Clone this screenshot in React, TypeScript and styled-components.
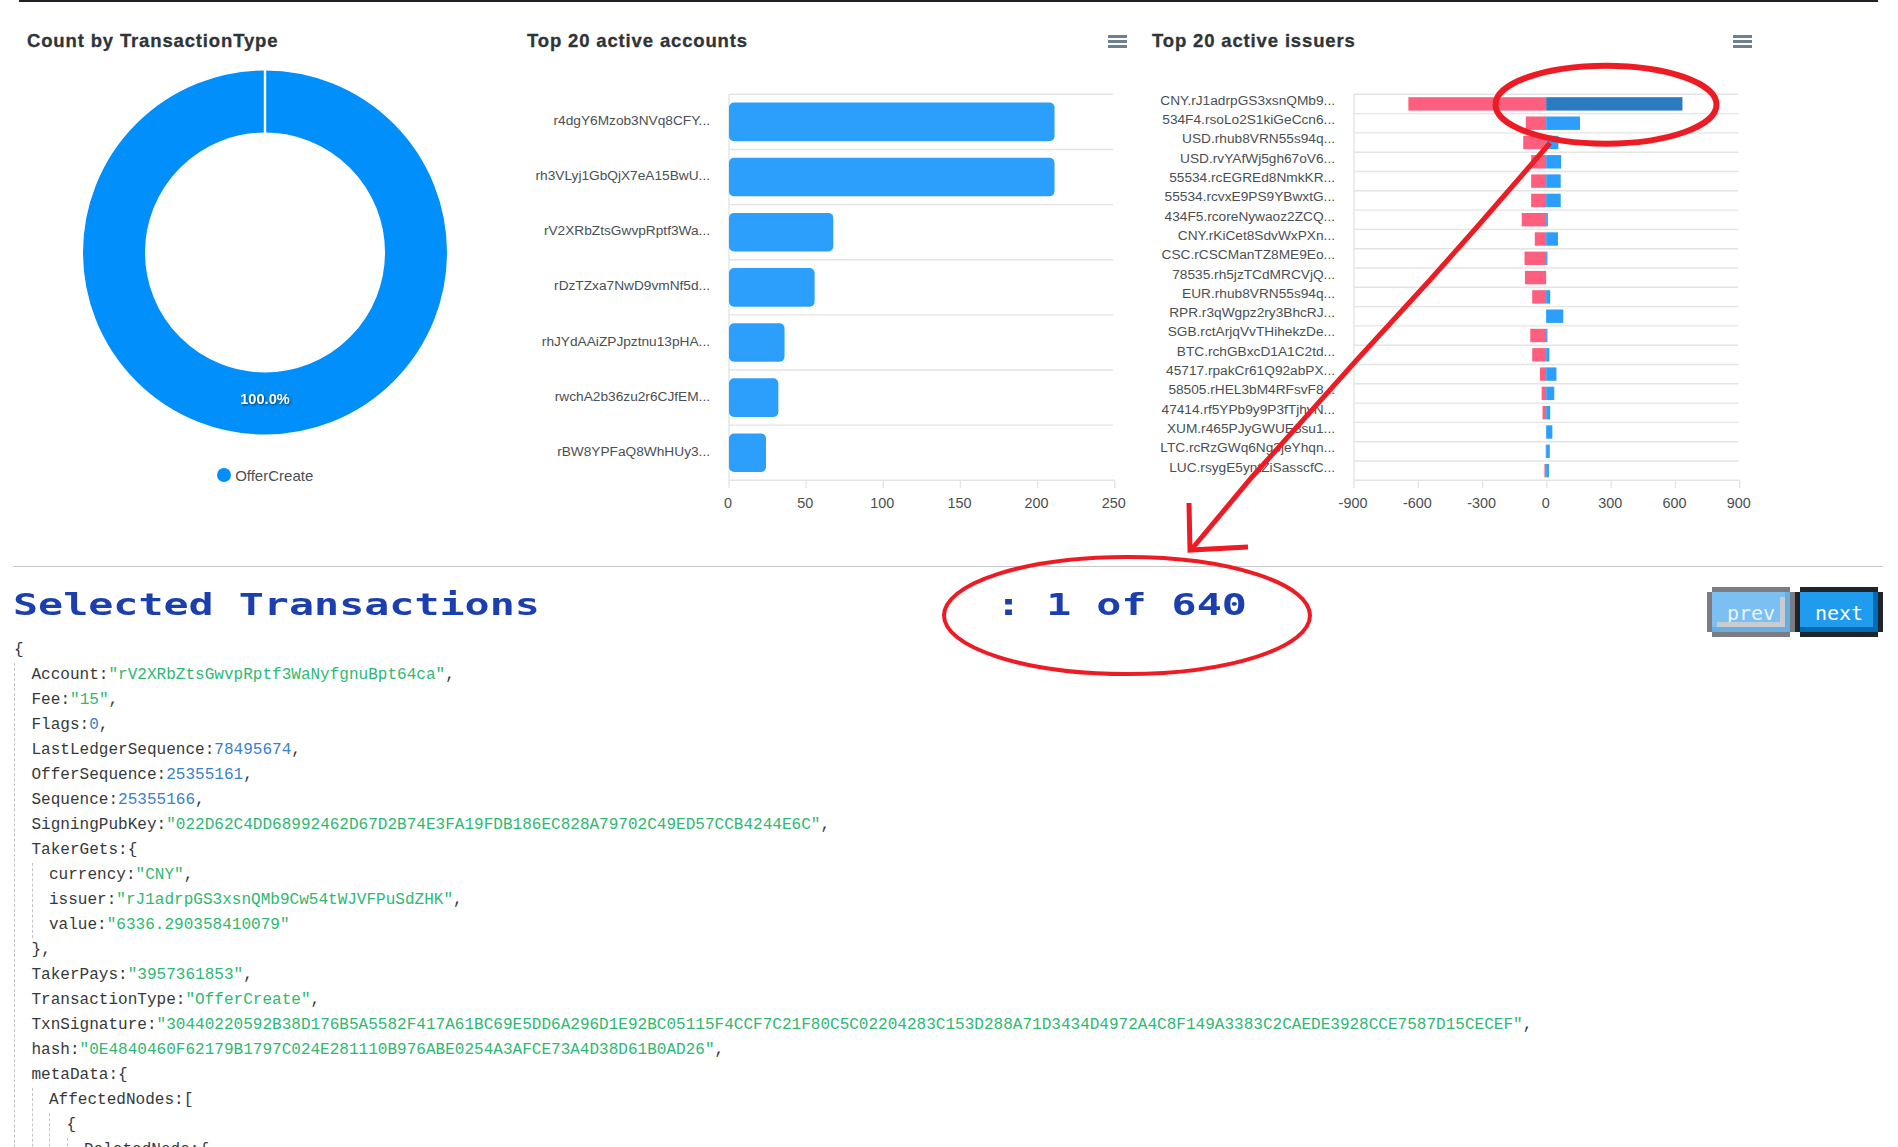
import React from "react";
import styled, { createGlobalStyle } from "styled-components";

const accounts = [
  { label: "r4dgY6Mzob3NVq8CFY...", value: 211 },
  { label: "rh3VLyj1GbQjX7eA15BwU...", value: 211 },
  { label: "rV2XRbZtsGwvpRptf3Wa...", value: 67.6 },
  { label: "rDzTZxa7NwD9vmNf5d...", value: 55.5 },
  { label: "rhJYdAAiZPJpztnu13pHA...", value: 36 },
  { label: "rwchA2b36zu2r6CJfEM...", value: 32 },
  { label: "rBW8YPFaQ8WhHUy3...", value: 24 },
];

const issuers = [
  { label: "CNY.rJ1adrpGS3xsnQMb9...", sell: 643, buy: 636 },
  { label: "534F4.rsoLo2S1kiGeCcn6...", sell: 95, buy: 158 },
  { label: "USD.rhub8VRN55s94q...", sell: 107, buy: 57 },
  { label: "USD.rvYAfWj5gh67oV6...", sell: 70, buy: 70 },
  { label: "55534.rcEGREd8NmkKR...", sell: 70, buy: 68 },
  { label: "55534.rcvxE9PS9YBwxtG...", sell: 70, buy: 68 },
  { label: "434F5.rcoreNywaoz2ZCQ...", sell: 114, buy: 8 },
  { label: "CNY.rKiCet8SdvWxPXn...", sell: 53, buy: 55 },
  { label: "CSC.rCSCManTZ8ME9Eo...", sell: 101, buy: 6 },
  { label: "78535.rh5jzTCdMRCVjQ...", sell: 99, buy: 0 },
  { label: "EUR.rhub8VRN55s94q...", sell: 65, buy: 19 },
  { label: "RPR.r3qWgpz2ry3BhcRJ...", sell: 0, buy: 80 },
  { label: "SGB.rctArjqVvTHihekzDe...", sell: 74, buy: 6 },
  { label: "BTC.rchGBxcD1A1C2td...", sell: 65, buy: 15 },
  { label: "45717.rpakCr61Q92abPX...", sell: 29, buy: 48 },
  { label: "58505.rHEL3bM4RFsvF8...", sell: 21, buy: 38 },
  { label: "47414.rf5YPb9y9P3fTjhyN...", sell: 17, buy: 19 },
  { label: "XUM.r465PJyGWUE8su1...", sell: 0, buy: 29 },
  { label: "LTC.rcRzGWq6Ng3jeYhqn...", sell: 2, buy: 17 },
  { label: "LUC.rsygE5yntZiSasscfC...", sell: 8, buy: 13 },
];

const transaction = {
  Account: "rV2XRbZtsGwvpRptf3WaNyfgnuBpt64ca",
  Fee: "15",
  Flags: 0,
  LastLedgerSequence: 78495674,
  OfferSequence: 25355161,
  Sequence: 25355166,
  SigningPubKey: "022D62C4DD68992462D67D2B74E3FA19FDB186EC828A79702C49ED57CCB4244E6C",
  TakerGets: {
    currency: "CNY",
    issuer: "rJ1adrpGS3xsnQMb9Cw54tWJVFPuSdZHK",
    value: "6336.290358410079",
  },
  TakerPays: "3957361853",
  TransactionType: "OfferCreate",
  TxnSignature:
    "30440220592B38D176B5A5582F417A61BC69E5DD6A296D1E92BC05115F4CCF7C21F80C5C02204283C153D288A71D3434D4972A4C8F149A3383C2CAEDE3928CCE7587D15CECEF",
  hash: "0E4840460F62179B1797C024E281110B976ABE0254A3AFCE73A4D38D61B0AD26",
  metaData: {
    AffectedNodes: [{ DeletedNode: {} }],
  },
};

const PLOT_LEFT = 214;
const PLOT_WIDTH = 385.7;
const PLOT_TOP = 39.3;
const PLOT_HEIGHT = 386;

function Axis({ ticks }: { ticks: string[] }) {
  const step = PLOT_WIDTH / (ticks.length - 1);
  const bottom = PLOT_TOP + PLOT_HEIGHT;
  return (
    <>
      <GridLine x1={PLOT_LEFT} x2={PLOT_LEFT} y1={PLOT_TOP} y2={bottom} />
      {ticks.map((tick, i) => (
        <g key={tick}>
          <GridLine
            x1={PLOT_LEFT + i * step}
            x2={PLOT_LEFT + i * step}
            y1={bottom}
            y2={bottom + 8}
          />
          <TickLabel x={PLOT_LEFT + i * step - 1} y={bottom + 22.5}>
            {tick}
          </TickLabel>
        </g>
      ))}
    </>
  );
}

function AccountsChart() {
  const row = PLOT_HEIGHT / accounts.length;
  const scale = PLOT_WIDTH / 250;
  return (
    <ChartSvg width="625" height="509">
      {accounts.map((a, i) => (
        <GridLine
          key={a.label}
          x1={PLOT_LEFT}
          x2={PLOT_LEFT + PLOT_WIDTH - 1.5}
          y1={PLOT_TOP + i * row}
          y2={PLOT_TOP + i * row}
        />
      ))}
      <GridLine
        x1={PLOT_LEFT}
        x2={PLOT_LEFT + PLOT_WIDTH}
        y1={PLOT_TOP + PLOT_HEIGHT}
        y2={PLOT_TOP + PLOT_HEIGHT}
      />
      <Axis ticks={["0", "50", "100", "150", "200", "250"]} />
      {accounts.map((a, i) => (
        <g key={a.label}>
          <AxisLabel x={195} y={PLOT_TOP + i * row + row / 2 - 1.4}>
            {a.label}
          </AxisLabel>
          <rect
            x={PLOT_LEFT}
            y={PLOT_TOP + i * row + 8.3}
            width={a.value * scale}
            height={38.6}
            rx={5}
            fill="#2b9ffb"
          />
        </g>
      ))}
    </ChartSvg>
  );
}

function IssuersChart() {
  const row = PLOT_HEIGHT / issuers.length;
  const scale = PLOT_WIDTH / 1800;
  const zero = PLOT_LEFT + PLOT_WIDTH / 2 - 0.7;
  return (
    <ChartSvg width="625" height="509">
      {issuers.map((a, i) => (
        <GridLine
          key={a.label}
          x1={PLOT_LEFT}
          x2={PLOT_LEFT + PLOT_WIDTH - 1.5}
          y1={PLOT_TOP + i * row}
          y2={PLOT_TOP + i * row}
        />
      ))}
      <GridLine
        x1={PLOT_LEFT}
        x2={PLOT_LEFT + PLOT_WIDTH}
        y1={PLOT_TOP + PLOT_HEIGHT}
        y2={PLOT_TOP + PLOT_HEIGHT}
      />
      <Axis ticks={["-900", "-600", "-300", "0", "300", "600", "900"]} />
      {issuers.map((a, i) => {
        const y = PLOT_TOP + i * row + 2.9;
        return (
          <g key={a.label}>
            <AxisLabel x={195} y={PLOT_TOP + i * row + 6}>
              {a.label}
            </AxisLabel>
            <rect x={zero - a.sell * scale} y={y} width={a.sell * scale} height={13.4} fill="#ff5f7e" />
            <rect x={zero} y={y} width={a.buy * scale} height={13.4} fill={i === 0 ? "#2a7bc0" : "#2b9ffb"} />
          </g>
        );
      })}
    </ChartSvg>
  );
}

function Value({ value, comma }: { value: unknown; comma: boolean }) {
  const tail = comma ? <Punct>,</Punct> : null;
  if (typeof value === "string") {
    return (
      <>
        <Str>"{value}"</Str>
        {tail}
      </>
    );
  }
  if (typeof value === "number") {
    return (
      <>
        <Num>{value}</Num>
        {tail}
      </>
    );
  }
  const isArray = Array.isArray(value);
  const items: [string | null, unknown][] = isArray
    ? (value as unknown[]).map((v) => [null, v])
    : Object.entries(value as object);
  return (
    <>
      <Punct>{isArray ? "[" : "{"}</Punct>
      <Block>
        {items.map(([key, v], i) => (
          <Line key={key ?? i}>
            {key && <Key>{key}:</Key>}
            <Value value={v} comma={i < items.length - 1} />
          </Line>
        ))}
      </Block>
      <Punct>{isArray ? "]" : "}"}</Punct>
      {tail}
    </>
  );
}

export default function App() {
  return (
    <Page>
      <GlobalStyle />
      <TopBar />
      <ChartRow>
        <Panel>
          <PanelHeader>
            <PanelTitle>Count by TransactionType</PanelTitle>
          </PanelHeader>
          <ChartSvg width="500" height="400">
            <circle cx="250" cy="197.5" r="151" fill="none" stroke="#008ffb" strokeWidth="62" />
            <rect x="248.8" y="15" width="2.4" height="63" fill="#fff" />
            <DonutLabel x="250" y="344">
              100.0%
            </DonutLabel>
          </ChartSvg>
          <Legend>
            <LegendDot />
            OfferCreate
          </Legend>
        </Panel>
        <Panel>
          <PanelHeader>
            <PanelTitle>Top 20 active accounts</PanelTitle>
            <MenuIcon />
          </PanelHeader>
          <AccountsChart />
        </Panel>
        <Panel>
          <PanelHeader>
            <PanelTitle>Top 20 active issuers</PanelTitle>
            <MenuIcon />
          </PanelHeader>
          <IssuersChart />
        </Panel>
      </ChartRow>
      <Divider />
      <SectionHeader>
        <HeadingSlot>
          <Heading>Selected Transactions</Heading>
        </HeadingSlot>
        <CounterSlot>
          <Heading>: 1 of 640</Heading>
        </CounterSlot>
        <Buttons>
          <PixelButton $disabled>prev</PixelButton>
          <PixelButton>next</PixelButton>
        </Buttons>
      </SectionHeader>
      <Code>
        <Value value={transaction} comma={false} />
      </Code>
      <Annotations width="1898" height="1147" viewBox="0 0 1898 1147">
        <ellipse cx="1606" cy="104.7" rx="110.5" ry="39" strokeWidth="6" />
        <ellipse cx="1127" cy="615.5" rx="183" ry="58.5" strokeWidth="4" />
        <polyline points="1550,143 1477,227 1430,280 1354,363 1252,477 1191,550" />
        <polyline points="1189,503 1190,550 1248,547" />
      </Annotations>
    </Page>
  );
}

function MenuIcon() {
  return (
    <svg width="19" height="13" viewBox="0 0 19 13" fill="#6e8192">
      <rect width="19" height="3" y="0" />
      <rect width="19" height="3" y="5" />
      <rect width="19" height="3" y="10" />
    </svg>
  );
}

const GlobalStyle = createGlobalStyle`
  html, body {
    margin: 0;
    height: 100%;
    overflow: hidden;
    background: #fff;
  }
`;

const Page = styled.div`
  position: relative;
  box-sizing: border-box;
  width: 1898px;
  height: 1147px;
  overflow: hidden;
  padding: 0 15px 0 13px;
  font-family: "Liberation Sans", Arial, sans-serif;
`;

const TopBar = styled.div`
  height: 2px;
  width: 1859px;
  margin-left: 6px;
  background: #1f2328;
`;

const ChartRow = styled.div`
  display: grid;
  grid-template-columns: 500px 625px 625px;
  height: 564px;
  margin-left: 2px;
`;

const Panel = styled.section`
  display: flex;
  flex-direction: column;
`;

const PanelHeader = styled.div`
  display: flex;
  align-items: center;
  justify-content: space-between;
  box-sizing: border-box;
  height: 53px;
  padding: 25px 13px 0 12px;
`;

const PanelTitle = styled.h3`
  margin: 0;
  font-size: 18.5px;
  line-height: 28px;
  font-weight: 700;
  letter-spacing: 0.85px;
  color: #2f3437;
  -webkit-text-stroke: 0.3px #2f3437;
`;

const ChartSvg = styled.svg`
  display: block;
  font-family: "Liberation Sans", Arial, sans-serif;
`;

const GridLine = styled.line`
  stroke: #e4e4e4;
  stroke-width: 1.4;
`;

const AxisLabel = styled.text`
  font-size: 13.7px;
  fill: #4a4f52;
  text-anchor: end;
  dominant-baseline: central;
`;

const TickLabel = styled.text`
  font-size: 14.4px;
  fill: #4a4f52;
  text-anchor: middle;
  dominant-baseline: central;
`;

const DonutLabel = styled.text`
  font-size: 14.6px;
  font-weight: 700;
  fill: #fff;
  text-anchor: middle;
  dominant-baseline: central;
  filter: drop-shadow(1px 1px 1px rgba(0, 0, 0, 0.55));
`;

const Legend = styled.div`
  display: flex;
  align-items: center;
  justify-content: center;
  gap: 4px;
  margin-top: 8px;
  height: 24px;
  font-size: 15px;
  color: #4a4f52;
`;

const LegendDot = styled.span`
  width: 14.4px;
  height: 14.4px;
  border-radius: 50%;
  background: #008ffb;
`;

const Divider = styled.div`
  height: 1px;
  background: #c8c8c8;
`;

const SectionHeader = styled.div`
  display: flex;
  align-items: center;
  height: 50px;
  margin-top: 20px;
`;

const HeadingSlot = styled.div`
  width: 983px;
  padding-bottom: 14px;
`;

const CounterSlot = styled.div`
  flex: 1;
  padding-bottom: 14px;
`;

const Heading = styled.h2`
  margin: 0;
  display: inline-block;
  font-family: "DejaVu Sans Mono", "Liberation Mono", monospace;
  font-size: 30.6px;
  line-height: 36px;
  font-weight: 700;
  color: #1c3fb0;
  white-space: pre;
  transform: scaleX(1.362);
  transform-origin: left center;
`;

const Buttons = styled.div`
  display: flex;
  gap: 10px;
  padding: 0 5px;
`;

const PixelButton = styled.button<{ $disabled?: boolean }>`
  position: relative;
  box-sizing: border-box;
  width: 78px;
  height: 40px;
  padding: 1px 0 0;
  border: none;
  font-family: "DejaVu Sans Mono", "Liberation Mono", monospace;
  font-size: 20px;
  color: ${(p) => (p.$disabled ? "#e8f4fd" : "#fff")};
  background: ${(p) => (p.$disabled ? "#7cc0f3" : "#209cee")};
  box-shadow: ${(p) => {
    const edge = p.$disabled ? "#7b7d80" : "#212529";
    const inner = p.$disabled ? "#67aedf" : "#006bb3";
    return `0 -5px ${edge}, 0 5px ${edge}, -5px 0 ${edge}, 5px 0 ${edge}, inset -5px -5px ${inner}`;
  }};

  &::after {
    content: "";
    display: ${(p) => (p.$disabled ? "block" : "none")};
    position: absolute;
    left: 5px;
    top: 5px;
    right: 5px;
    bottom: 5px;
    border-right: 5px solid #c8ccd0;
    border-bottom: 5px solid #c8ccd0;
  }
`;

const Code = styled.div`
  padding: 1px 0 0 1px;
  font-family: "Liberation Mono", monospace;
  font-size: 16.04px;
  line-height: 25px;
  color: #36393a;
  white-space: pre;
`;

const Block = styled.div`
  padding-left: 16.5px;
  border-left: 1px dashed #c4c4c4;
`;

const Line = styled.div``;

const Key = styled.span`
  color: #36393a;
`;

const Punct = styled.span`
  color: #36393a;
`;

const Str = styled.span`
  color: #2fb872;
`;

const Num = styled.span`
  color: #3a7fc9;
`;

const Annotations = styled.svg`
  position: absolute;
  left: 0;
  top: 0;
  pointer-events: none;
  fill: none;
  stroke: #ed1c24;
  stroke-width: 5;
`;
